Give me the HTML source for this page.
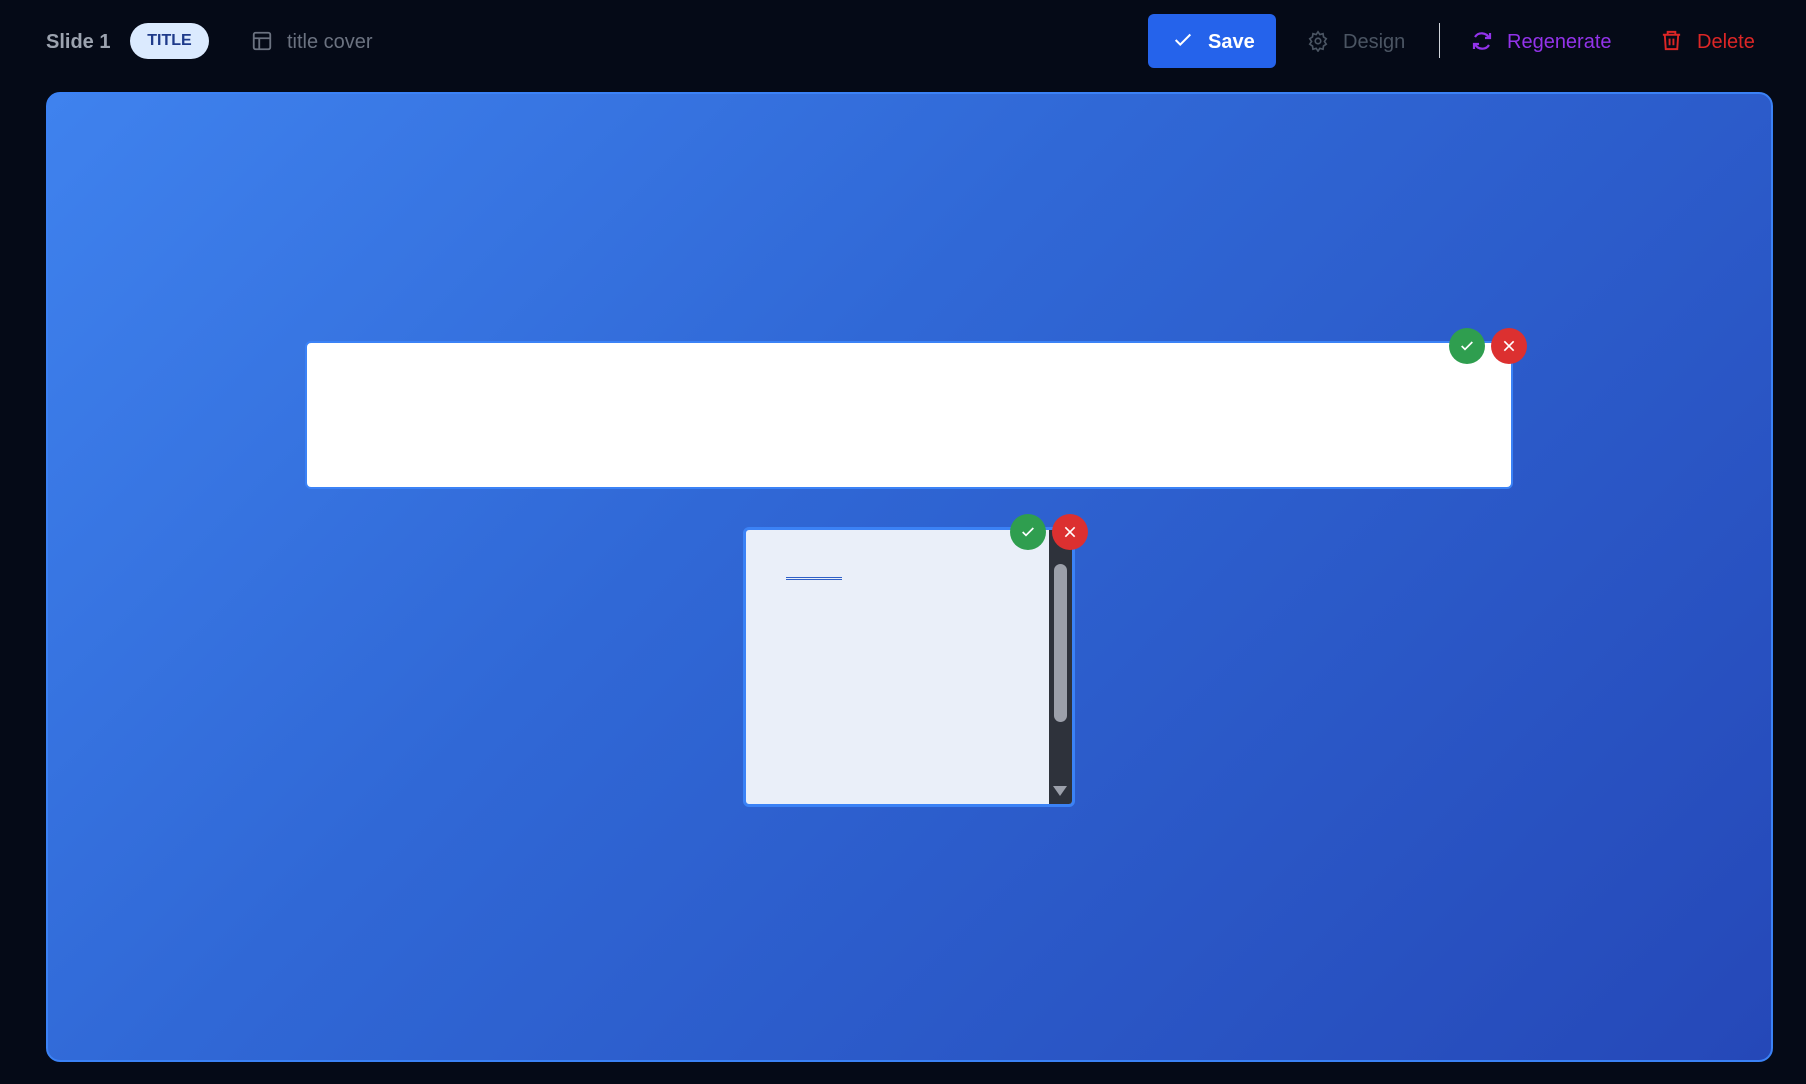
<!DOCTYPE html>
<html><head><style>
*{margin:0;padding:0;box-sizing:border-box}
body{width:1806px;height:1084px;background:#050a17;font-family:"Liberation Sans",sans-serif;position:relative;overflow:hidden}
.a{position:absolute}
.t{font-size:20px;line-height:1;white-space:nowrap}
.slide{left:46px;top:92px;width:1727px;height:970px;border-radius:14px;border:2px solid #3b82f6;background:linear-gradient(135deg,#3f82ee 0%,#3068d6 40%,#2548b8 100%)}
.btn{width:36px;height:36px;border-radius:50%;display:flex;align-items:center;justify-content:center}
</style></head><body>
<div class="a t" style="left:46px;top:32px;color:#9ca3af;font-weight:600">Slide 1</div>
<div class="a" style="left:130px;top:23px;width:79px;height:36px;border-radius:18px;background:#dbeafe;color:#1e3a8a;font-size:16px;font-weight:600;display:flex;align-items:center;justify-content:center">TITLE</div>
<svg class="a" style="left:251px;top:30px" width="22" height="22" viewBox="0 0 24 24" fill="none" stroke="#6b7280" stroke-width="2"><rect x="3" y="3" width="18" height="18" rx="2"/><path d="M3 9h18M9 9v12"/></svg>
<div class="a t" style="left:287px;top:32px;color:#6b7280">title cover</div>
<div class="a" style="left:1148px;top:14px;width:128px;height:54px;border-radius:6px;background:#2563eb"></div>
<svg class="a" style="left:1172px;top:29px" width="22" height="22" viewBox="0 0 24 24" fill="none" stroke="#fff" stroke-width="2.2"><path d="M4 12l5 5L20 6"/></svg>
<div class="a t" style="left:1208px;top:32px;color:#fff;font-weight:bold">Save</div>
<svg class="a" style="left:1307px;top:30px" width="22" height="22" viewBox="0 0 24 24" fill="none" stroke="#4b5563" stroke-width="1.8"><circle cx="12" cy="12" r="3"/><path d="M12 2l2 3 3.5-1 .5 3.5 3 2-2 3 2 3-3 2-.5 3.5-3.5-1-2 3-2-3-3.5 1-.5-3.5-3-2 2-3-2-3 3-2 .5-3.5 3.5 1z"/></svg>
<div class="a t" style="left:1343px;top:32px;color:#4b5563">Design</div>
<div class="a" style="left:1439px;top:23px;width:1px;height:35px;background:#d1d5db"></div>
<svg class="a" style="left:1470px;top:29px" width="24" height="24" viewBox="0 0 24 24" fill="none" stroke="#9333ea" stroke-width="2.2"><path d="M20 4v5h-5M4 20v-5h5"/><path d="M19 9A8 8 0 0 0 5 8M5 15a8 8 0 0 0 14 1"/></svg>
<div class="a t" style="left:1507px;top:32px;color:#9333ea">Regenerate</div>
<svg class="a" style="left:1660px;top:29px" width="23" height="23" viewBox="0 0 24 24" fill="none" stroke="#dc2626" stroke-width="2"><path d="M3 6h18M8 6V3h8v3M5 6l1 15h12l1-15M10 10v7M14 10v7"/></svg>
<div class="a t" style="left:1697px;top:32px;color:#dc2626">Delete</div>
<div class="a slide"></div>
<div class="a" style="left:305px;top:341px;width:1208px;height:148px;background:#fff;border:2px solid #3b82f6;border-radius:6px"></div>
<div class="a btn" style="left:1449px;top:328px;background:#2f9e4f"><svg width="16" height="16" viewBox="0 0 24 24" fill="none" stroke="#fff" stroke-width="2.5"><path d="M4 12l5 5L20 6"/></svg></div>
<div class="a btn" style="left:1491px;top:328px;background:#dc3030"><svg width="16" height="16" viewBox="0 0 24 24" fill="none" stroke="#fff" stroke-width="2.5"><path d="M5 5l14 14M19 5L5 19"/></svg></div>
<div class="a" style="left:743px;top:527px;width:332px;height:280px;background:#eaeff9;border:3px solid #3b82f6;border-radius:6px;overflow:hidden">
<div class="a" style="left:40px;top:47px;width:56px;height:3px;border-top:1px solid #2f5fc7;border-bottom:1px solid #2f5fc7"></div>
<div class="a" style="right:0;top:0;width:23px;height:100%;background:#2e323b"></div>
<div class="a" style="right:5px;top:34px;width:13px;height:158px;border-radius:7px;background:#9ca0aa"></div>
<div class="a" style="right:5px;top:256px;width:0;height:0;border-left:7px solid transparent;border-right:7px solid transparent;border-top:10px solid #9ca0aa"></div>
</div>
<div class="a btn" style="left:1010px;top:514px;background:#2f9e4f"><svg width="16" height="16" viewBox="0 0 24 24" fill="none" stroke="#fff" stroke-width="2.5"><path d="M4 12l5 5L20 6"/></svg></div>
<div class="a btn" style="left:1052px;top:514px;background:#dc3030"><svg width="16" height="16" viewBox="0 0 24 24" fill="none" stroke="#fff" stroke-width="2.5"><path d="M5 5l14 14M19 5L5 19"/></svg></div>
</body></html>
